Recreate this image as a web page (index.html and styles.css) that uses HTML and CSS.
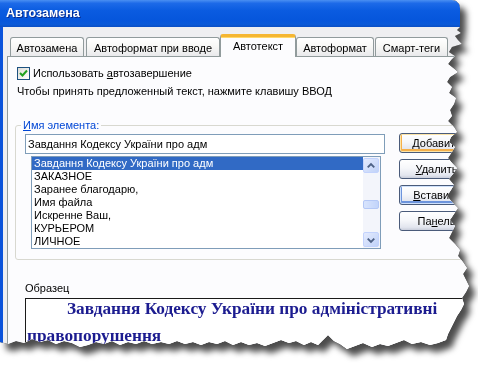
FILE: index.html
```html
<!DOCTYPE html>
<html lang="ru">
<head>
  <meta charset="UTF-8">
  <title>Автозамена</title>
  <link rel="stylesheet" href="styles.css">
</head>
<body>
  <div class="stage">
    <div class="dialog">
      <div class="titlebar"><span class="title">Автозамена</span></div>
      <div class="frame">
        <div class="tabs">
          <div class="tab t1">Автозамена</div>
          <div class="tab t2">Автоформат при вводе</div>
          <div class="tab active t3">Автотекст</div>
          <div class="tab t4">Автоформат</div>
          <div class="tab t5">Смарт-теги</div>
        </div>
        <div class="panel">
          <div class="check-row">
            <span class="checkbox">
              <svg width="11" height="11" viewBox="0 0 11 11"><polyline points="2,5 4.5,7.5 9,2.5" fill="none" stroke="#21a121" stroke-width="2"/></svg>
            </span>
            <span>Использовать <u>а</u>втозавершение</span>
          </div>
          <p class="hint">Чтобы принять предложенный текст, нажмите клавишу ВВОД</p>

          <fieldset class="group">
            <legend><u>И</u>мя элемента:</legend>
            <div class="group-body">
              <div class="entry-col">
                <div class="textbox">Завдання Кодексу України про адм</div>
                <div class="listbox">
                  <ul class="items">
                    <li class="selected">Завдання Кодексу України про адм</li>
                    <li>ЗАКАЗНОЕ</li>
                    <li>Заранее благодарю,</li>
                    <li>Имя файла</li>
                    <li>Искренне Ваш,</li>
                    <li>КУРЬЕРОМ</li>
                    <li>ЛИЧНОЕ</li>
                  </ul>
                  <div class="scrollbar">
                    <div class="sb-btn">
                      <svg width="15" height="14" viewBox="0 0 15 14"><path d="M4 8.5 L7.5 5 L11 8.5" fill="none" stroke="#4d6185" stroke-width="2"/></svg>
                    </div>
                    <div class="sb-track">
                      <div class="sb-thumb"></div>
                    </div>
                    <div class="sb-btn">
                      <svg width="15" height="14" viewBox="0 0 15 14"><path d="M4 5.5 L7.5 9 L11 5.5" fill="none" stroke="#4d6185" stroke-width="2"/></svg>
                    </div>
                  </div>
                </div>
              </div>
              <div class="buttons">
                <div class="btn hot"><u>Д</u>обавить</div>
                <div class="btn"><u>У</u>далить</div>
                <div class="btn default"><u>В</u>ставить</div>
                <div class="btn">Па<u>н</u>ель</div>
              </div>
            </div>
          </fieldset>

          <div class="sample-label">Образец</div>
          <div class="sample">
            <p>Завдання Кодексу України про адміністративні правопорушення</p>
          </div>
        </div>
      </div>
    </div>
  </div>
</body>
</html>
```

FILE: styles.css
```css
*,
*::before,
*::after{
  box-sizing: border-box;
}
html, body{
  overflow: hidden;
}
body{
  margin: 0;
  background: #fff;
  font-family: "Liberation Sans", Arial, sans-serif;
  font-size: 11px;
  color: #000;
}

/* torn screenshot with a shadow */
.stage{
  width: 478px;
  height: 366px;
  filter: drop-shadow(0 0 0.6px rgba(0,0,0,.9)) drop-shadow(6px 7px 3px rgba(0,0,0,.7));
}
.dialog{
  width: 478px;
  height: 366px;
  display: flex;
  flex-direction: column;
  overflow: hidden;
  background: #efeff1;
  clip-path: polygon(
    0 0, 452px 0, 456px 1px, 459px 4px, 460px 8px, 460px 27px,
    457px 30px, 461px 33px, 455px 36px, 458px 40px, 462px 44px, 452px 47px,
    449px 52px, 455px 56px, 451px 60px, 448px 64px, 453px 68px, 458px 72px,
    450px 77px, 447px 82px, 452px 87px, 449px 93px, 456px 98px, 454px 104px,
    450px 110px, 452px 116px, 448px 121px, 454px 127px, 457px 132px, 451px 137px,
    449px 142px, 455px 147px, 452px 152px, 448px 158px, 452px 163px, 457px 168px,
    453px 174px, 449px 179px, 454px 185px, 451px 190px, 447px 196px, 452px 202px,
    458px 208px, 454px 214px, 450px 220px, 455px 226px, 452px 232px, 449px 238px,
    455px 244px, 460px 250px, 458px 256px, 463px 262px, 467px 268px, 463px 274px,
    466px 280px, 469px 286px, 466px 292px, 462px 298px, 464px 304px, 461px 310px,
    457px 316px, 454px 322px, 451px 328px, 448px 334px, 446px 340px,
    438px 343px, 430px 345px, 421px 342px, 412px 344px, 404px 340px, 396px 343px,
    388px 346px, 380px 344px, 372px 347px, 363px 343px, 355px 346px, 347px 349px,
    340px 344px, 334px 341px, 328px 335px, 323px 340px, 318px 345px, 311px 342px,
    304px 345px, 296px 341px, 289px 343px, 281px 340px, 273px 343px, 265px 346px,
    257px 343px, 249px 345px, 241px 342px, 233px 345px, 225px 341px, 217px 344px,
    209px 342px, 201px 345px, 193px 342px, 185px 344px, 177px 341px, 169px 344px,
    161px 342px, 152px 344px, 144px 341px, 136px 344px, 128px 342px, 120px 345px,
    112px 341px, 104px 344px, 96px 342px, 88px 345px, 80px 347px, 72px 343px,
    64px 341px, 56px 344px, 48px 340px, 40px 342px, 32px 339px, 24px 343px,
    16px 341px, 8px 344px, 0 342px
  );
}

.titlebar{
  height: 27px;
  flex: none;
  padding: 4px 0 0 6px;
  background: linear-gradient(#4a8ff2 0%, #1d6ae8 12%, #0a5be0 40%, #0656dc 75%, #0a5ad8 90%, #0b4fc4 100%);
}
.title{
  color: #fff;
  font-weight: bold;
  font-size: 12.5px;
  line-height: 18px;
  text-shadow: 1px 1px 0 #0a2a8a;
}

.frame{
  flex: 1;
  display: flex;
  flex-direction: column;
  border-left: 3px solid #0b53db;
  padding: 7px 0 0 4px;
}

.tabs{
  display: flex;
  align-items: flex-end;
  height: 22px;
  padding-left: 3px;
  position: relative;
  z-index: 1;
}
.tab{
  height: 19px;
  line-height: 19px;
  text-align: center;
  border: 1px solid #919b9c;
  border-bottom: 0;
  border-radius: 3px 3px 0 0;
  background: linear-gradient(#fff 0%, #f7f7f5 50%, #e9e9ec 100%);
  white-space: nowrap;
  padding-top: 1px;
}
.t1{ width: 74px; }
.t2{ width: 134px; margin-left: 2px; }
.t3{ width: 76px; }
.t4{ width: 78px; }
.t5{ width: 73px; margin-left: 1px; }
.tab.active{
  height: 23px;
  margin-bottom: -1px;
  border-top: 3px solid #f5b632;
  background: #fcfcfe;
  line-height: 19px;
  padding-top: 0;
  box-shadow: inset 0 1px 0 #ffd86a;
}

.panel{
  flex: 1;
  border: 1px solid #919b9c;
  border-right: 0;
  background: #fcfcfe;
  padding: 10px 0 0 9px;
}

.check-row{
  display: flex;
  align-items: center;
  gap: 3px;
  height: 13px;
  line-height: 13px;
}
.checkbox{
  width: 13px;
  height: 13px;
  border: 1px solid #1c5180;
  background: linear-gradient(135deg, #dcdcd7, #fff);
  display: flex;
  align-items: center;
  justify-content: center;
}
.hint{
  margin: 5px 0 0;
  line-height: 13px;
}

.group{
  margin: 21px 0 0 -2px;
  padding: 0 0 10px 0;
  width: 455px;
  min-width: 0;
  border: 1px solid #d8d8d0;
  border-radius: 3px;
}
.group legend{
  margin-left: 5px;
  padding: 0 2px;
  line-height: 13px;
  color: #0046d5;
}
.group-body{
  display: flex;
  align-items: flex-start;
  padding-left: 9px;
  margin-top: 2px;
}
.entry-col{
  width: 360px;
  flex: none;
}
.textbox{
  height: 20px;
  border: 1px solid #7f9db9;
  background: #fff;
  padding-left: 2px;
  line-height: 18px;
  white-space: nowrap;
}
.listbox{
  margin: 2px 0 0 6px;
  width: 350px;
  height: 93px;
  border: 1px solid #7f9db9;
  background: #fff;
  display: flex;
}
.items{
  flex: 1;
  list-style: none;
  margin: 0;
  padding: 0;
}
.items li{
  height: 13px;
  line-height: 13px;
  padding-left: 2px;
  white-space: nowrap;
}
.items li.selected{
  background: #316ac5;
  color: #fff;
}

.scrollbar{
  width: 17px;
  display: flex;
  flex-direction: column;
  background: #f3f5fb;
  padding: 1px 1px 1px 0;
}
.sb-btn{
  height: 15px;
  border: 1px solid #c3d3fd;
  border-radius: 2px;
  background: linear-gradient(135deg, #e4ebfe, #c0d2f8);
  display: flex;
  align-items: center;
  justify-content: center;
}
.sb-track{
  flex: 1;
  display: flex;
  flex-direction: column;
  justify-content: center;
}
.sb-thumb{
  height: 9px;
  margin-top: 4px;
  border: 1px solid #b4c8f6;
  border-radius: 2px;
  background: linear-gradient(90deg, #d8e4fd, #c2d4fa);
}

.buttons{
  display: flex;
  flex-direction: column;
  gap: 6px;
  margin: -1px 0 0 14px;
  overflow: hidden;
}
.btn{
  width: 75px;
  height: 20px;
  line-height: 18px;
  text-align: center;
  border: 1px solid #4a5b7a;
  border-radius: 3px;
  background: linear-gradient(#fff 0%, #f6f7fa 45%, #e2e5ee 85%, #c9cedb 100%);
  white-space: nowrap;
}
.btn.hot{
  box-shadow: inset 0 0 0 1px #fce4a8, inset 0 -1px 0 2px #f5b04a;
}
.btn.default{
  box-shadow: inset 0 0 0 1px #cee0fb, inset 0 -1px 0 2px #6d94dc;
}

.sample-label{
  margin: 22px 0 0 8px;
  line-height: 13px;
}
.sample{
  margin: 3px 0 0 8px;
  width: 445px;
  height: 70px;
  border: 1px solid #1a1a1a;
  border-right: 0;
  background: #fff;
  overflow: hidden;
}
.sample p{
  margin: -4px 0 0;
  padding-left: 1px;
  text-indent: 40px;
  font-family: "Liberation Serif", "Times New Roman", serif;
  font-weight: bold;
  font-size: 17.3px;
  line-height: 27px;
  color: #1c1c90;
}
```
